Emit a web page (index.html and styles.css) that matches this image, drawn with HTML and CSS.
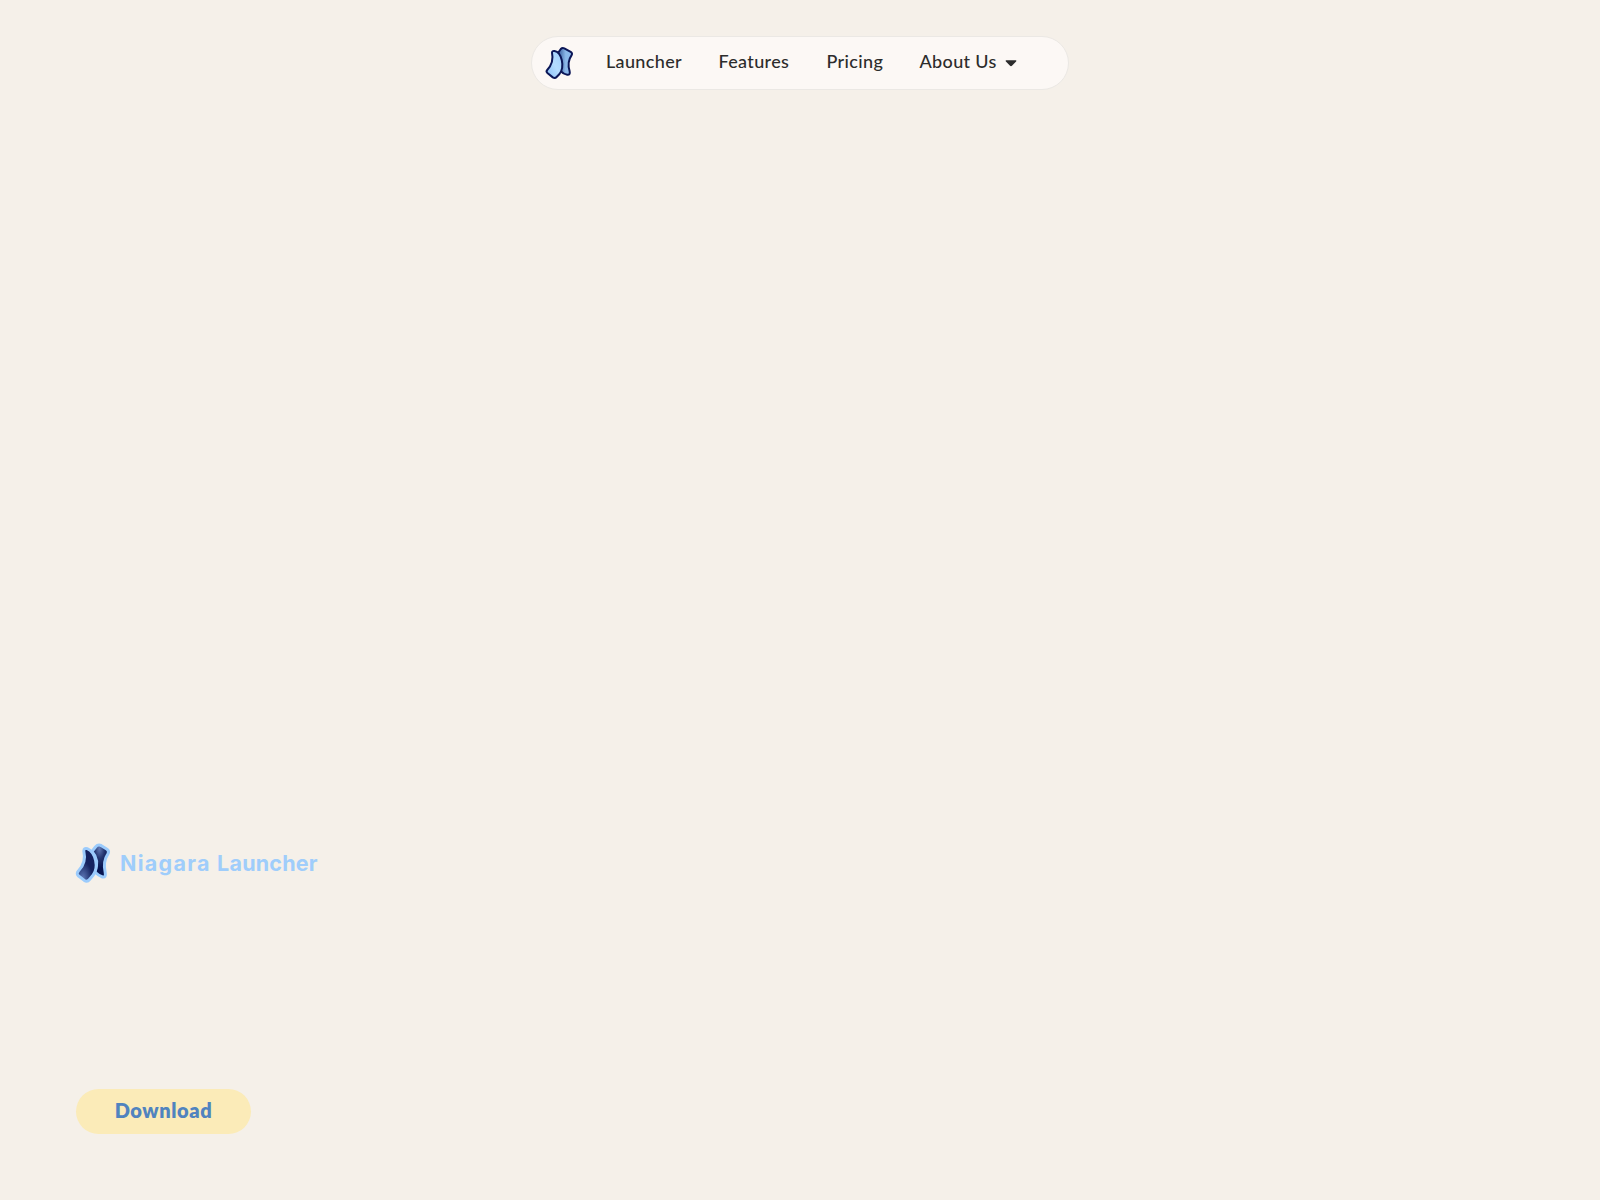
FILE: index.html
```html
<!DOCTYPE html>
<html lang="en">
<head>
  <meta charset="UTF-8" />
  <meta name="viewport" content="width=device-width, initial-scale=1" />
  <title>Niagara Launcher</title>
  <link rel="stylesheet" href="styles.css">
</head>
<body>
  <header>
    <nav class="navbar">
      <a class="nav-logo" href="#">
        <svg width="50" height="46" viewBox="0 0 50 46">
          <defs>
            <linearGradient id="navBack" x1="0" y1="0" x2="1" y2="0">
              <stop offset="0.2" stop-color="#5379b5" />
              <stop offset="0.55" stop-color="#8bb8ea" />
            </linearGradient>
            <linearGradient id="navFront" x1="0" y1="1" x2="1" y2="0">
              <stop offset="0" stop-color="#86bdf5" />
              <stop offset="0.5" stop-color="#b4dcff" />
              <stop offset="1" stop-color="#9dcdfc" />
            </linearGradient>
          </defs>
          <path class="nav-shape" fill="url(#navBack)" d="M23 13 L25.8 9 Q27.3 7.4 29.3 8.3 L35.7 11.8 Q37.9 13.2 36.5 15.4 C32.9 20.5 32.9 25.5 34.6 31 Q35.6 35.2 32.2 34.8 Q28.5 34.2 25.5 31 Z" />
          <path class="nav-shape" fill="url(#navFront)" d="M17 12.8 Q17 10.6 19.5 11 C26.8 12.2 30 27 24.5 34 L21.6 37 Q20 38.8 17.8 37.4 L12.4 33 Q10.8 31.6 12.2 30 C17.3 24.5 18.4 19 17 12.8 Z" />
        </svg>
      </a>
      <a class="nav-link launcher" href="#">Launcher</a>
      <a class="nav-link features" href="#">Features</a>
      <a class="nav-link pricing" href="#">Pricing</a>
      <a class="nav-link about" href="#">About Us</a>
      <svg class="caret" width="12" height="7" viewBox="0 0 12 7">
        <path d="M1.2 0.3 H10.8 Q12 0.7 11.1 1.6 L7.2 5.6 Q6 6.8 4.8 5.6 L0.9 1.6 Q0 0.7 1.2 0.3 Z" />
      </svg>
    </nav>
  </header>

  <main class="hero">
    <div class="brand">
      <svg width="50" height="50" viewBox="0 0 50 50">
        <defs>
          <radialGradient id="heroBack" cx="0.45" cy="0.12" r="0.6">
            <stop offset="0" stop-color="#6078b4" />
            <stop offset="0.5" stop-color="#24356f" />
            <stop offset="1" stop-color="#071450" />
          </radialGradient>
          <radialGradient id="heroFront" cx="0.3" cy="0.9" r="0.5">
            <stop offset="0" stop-color="#5c76b4" />
            <stop offset="1" stop-color="#14225f" />
          </radialGradient>
        </defs>
        <path class="hero-shape" fill="url(#heroBack)" d="M22 13.5 L25.5 9 Q28 6.2 31 7.5 L37 11.2 Q39.6 13.1 37.9 15.9 C33.8 22 33.8 28.5 35.2 34.5 Q36.2 39.6 32.5 39 Q28.5 37.5 24.8 34 C28 26 27 19 22 13.5 Z" />
        <path class="hero-shape" fill="url(#heroFront)" d="M13.8 13 Q14 9.6 17.2 10.7 C26 14.5 28.8 29.5 23.2 37 L19.5 41.5 Q17.3 44.4 14.3 42.4 L8.6 38 Q6 35.8 8.4 33 C14.3 27 15.6 20.5 13.8 13 Z" />
      </svg>
      <span class="brand-name"><span class="brand-wide">Niagara</span> Launcher</span>
    </div>
    <a class="download" href="#">Download</a>
  </main>
</body>
</html>
```
FILE: styles.css
```css
* {
  box-sizing: border-box;
}
body {
  margin: 0;
  height: 1200px;
  overflow: hidden;
  background: #f5f0e9;
  font-family: Lato, sans-serif;
  display: flex;
  flex-direction: column;
}
a {
  text-decoration: none;
}
header {
  padding-top: 36px;
  display: flex;
  justify-content: center;
}
.navbar {
  display: flex;
  align-items: center;
  width: 538px;
  height: 54px;
  padding-left: 3px;
  border: 1px solid #ebe8e4;
  border-radius: 27px;
  background: #fcf8f5;
}
.nav-logo {
  display: flex;
  width: 71px;
  margin-top: -1px;
}
.nav-link {
  flex: none;
  padding-bottom: 4px;
  font-size: 18px;
  line-height: 24px;
  font-weight: 500;
  letter-spacing: 0.35px;
  color: #2c2c2c;
  white-space: nowrap;
}
.launcher {
  width: 112.5px;
}
.features {
  width: 108px;
}
.pricing {
  width: 93px;
}
.about {
  width: 85.5px;
}
.caret {
  margin-top: 1px;
  fill: #2c2c2c;
}
.nav-shape {
  stroke: #0b1657;
  stroke-width: 2;
  stroke-linejoin: round;
}
.hero {
  flex: 1;
  display: flex;
  flex-direction: column;
  justify-content: space-between;
  align-items: flex-start;
  padding: 748px 0 66px 70px;
}
.brand {
  display: flex;
  align-items: center;
}
.hero-shape {
  stroke: #9bcbfc;
  stroke-width: 3;
  stroke-linejoin: round;
}
.brand-name {
  font-family: Inter, sans-serif;
  font-size: 21.5px;
  line-height: 30px;
  font-weight: 700;
  letter-spacing: 0.2px;
  word-spacing: 1px;
  color: #9fcdfb;
}
.brand-wide {
  letter-spacing: 1.3px;
}
.download {
  width: 175px;
  height: 45px;
  margin-left: 6px;
  border-radius: 23px;
  background: #fbebb8;
  color: #5083bf;
  font-size: 20px;
  line-height: 43px;
  font-weight: 800;
  letter-spacing: 0.6px;
  text-align: center;
}
```
